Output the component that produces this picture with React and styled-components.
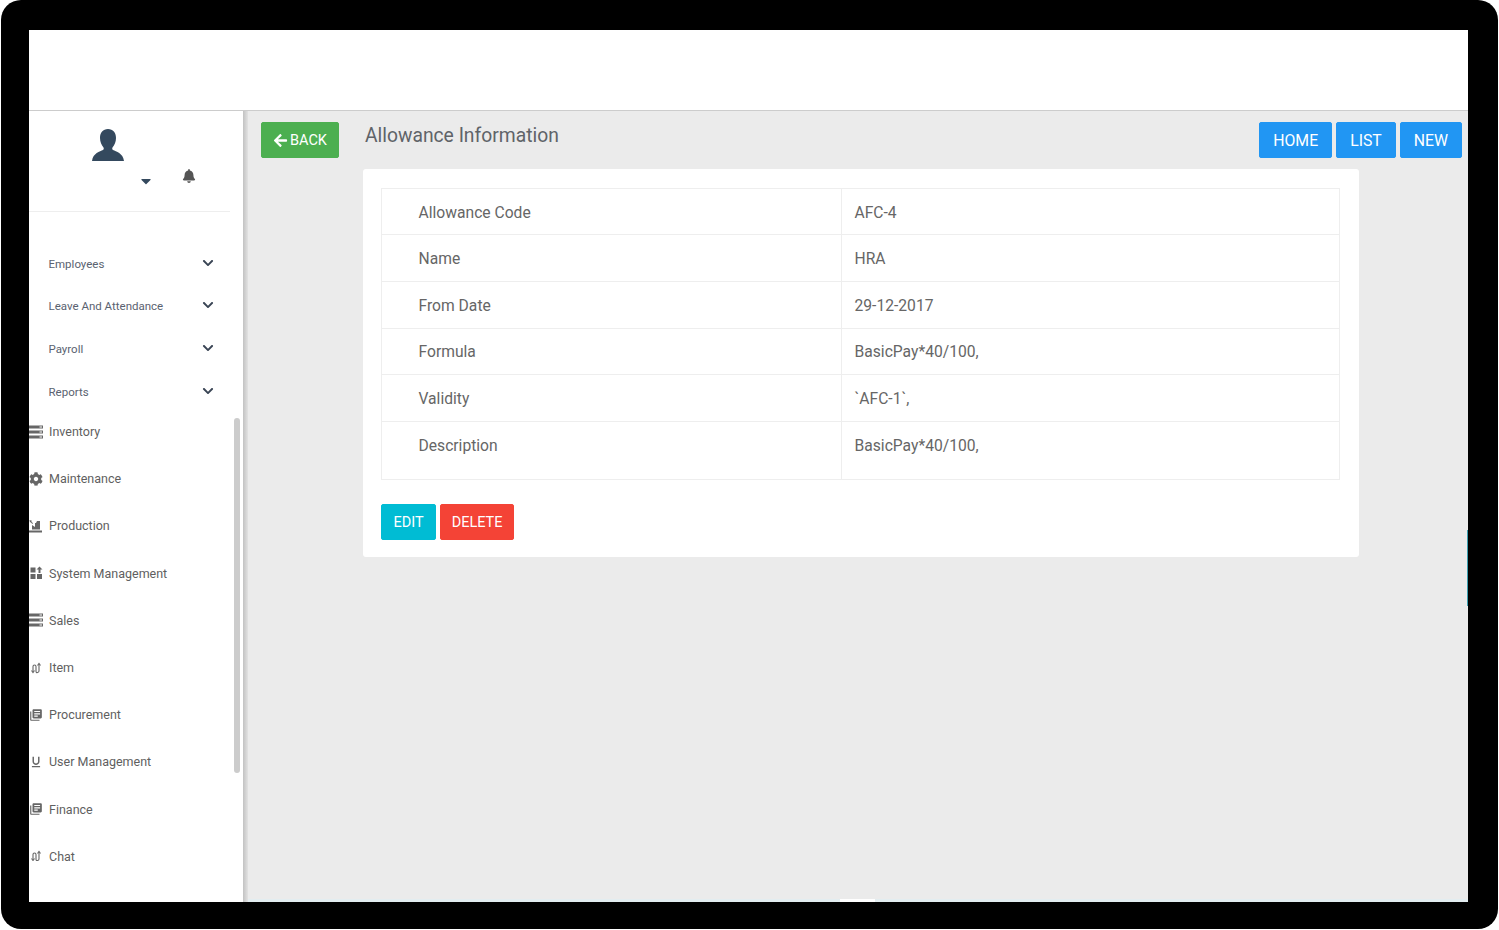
import React from "react";
import styled, { createGlobalStyle } from "styled-components";
import { FaArrowLeft, FaBell, FaChevronDown, FaCaretDown, FaCog } from "react-icons/fa";
import { MdLibraryBooks, MdFormatUnderlined } from "react-icons/md";

const Global = createGlobalStyle`
  html, body { margin: 0; padding: 0; background: #fff; }
  body { width: 1499px; height: 930px; overflow: hidden; font-family: Roboto, "Liberation Sans", sans-serif; }
  * { box-sizing: border-box; }
`;

const Frame = styled.div`
  width: 1497px; height: 929px; margin-left: 1px;
  background: #000;
  border-radius: 20px;
  padding: 30px 30px 27px 28px;
  display: flex; flex-direction: column;
`;
const TopBar = styled.header`
  height: 81px; flex: none; background: #fff; border-bottom: 1px solid #ccc;
`;
const Body = styled.div`
  flex: 1; min-height: 0; display: flex;
`;
const Sidebar = styled.aside`
  width: 214px; flex: none; background: #fff; position: relative; overflow: hidden;
  display: flex; flex-direction: column;
`;
const Profile = styled.div`
  width: 201px; height: 101px; flex: none; border-bottom: 1px solid #eee;
  display: flex; flex-direction: column; align-items: center; padding-top: 18px;
`;
const Avatar = styled.svg`
  width: 32px; height: 32px; color: #34495e; margin-left: -43px; flex: none;
`;
const ProfileTools = styled.div`
  display: flex; align-items: center; height: 24px; padding-left: 75px; gap: 28px;
`;
const Caret = styled(FaCaretDown)`
  color: #34495e; font-size: 16px; margin-top: 15px;
`;
const Bell = styled(FaBell)`
  color: #555; font-size: 14px; margin-top: 6px;
`;
const Scroller = styled.div`
  flex: 1; min-height: 0; margin-bottom: 41px; overflow: hidden;
`;
const SubMenu = styled.nav`
  padding-top: 31px; display: flex; flex-direction: column;
`;
const SubItem = styled.div`
  height: ${p => p.$h}px; display: flex; align-items: center; justify-content: space-between;
  padding: 0 29px 0 19.5px; font-size: 11.5px; color: #5a6270;
`;
const Chevron = styled(FaChevronDown)`
  font-size: 12px; color: #3a4555; margin-top: -2px;
`;
const MainMenu = styled.nav`
  display: flex; flex-direction: column; margin-top: -5px;
`;
const MenuItem = styled.div`
  height: 47.2px; flex: none; display: flex; align-items: center; gap: 6px;
  font-size: 12.5px; color: #5f5f5f; white-space: nowrap;
`;
const IconBox = styled.span`
  width: 14px; flex: none; display: flex; align-items: center; justify-content: center;
  color: #666; font-size: 14px; overflow: hidden;
`;
const ScrollThumb = styled.div`
  position: absolute; left: 205px; top: 307px; width: 6px; height: 355px;
  border-radius: 3px; background: #ccc;
`;
const Gutter = styled.div`
  width: 5px; flex: none; background: linear-gradient(90deg, #c2c2c2, #e2e2e2);
`;
const Main = styled.main`
  flex: 1; min-width: 0; background: #ebebeb; padding: 11px 6px 0 13px; position: relative;
  display: flex; flex-direction: column;
`;
const ActionBar = styled.div`
  display: flex; align-items: flex-start; height: 47px; flex: none;
`;
const Btn = styled.button`
  height: 36px; border: 1px solid ${p => p.$c}; background: ${p => p.$c}; color: #fff;
  border-radius: 2px; font: 400 ${p => p.$fs || 15.8}px Roboto, sans-serif;
  padding: ${p => p.$pt || 0}px ${p => p.$px || 13}px 0;
  display: inline-flex; align-items: center; gap: 2px; margin: 0;
`;
const PageTitle = styled.h1`
  margin: 0 0 0 26px; font: 400 19.3px/28px Roboto, sans-serif; color: #5f6368; flex: 1;
`;
const NavGroup = styled.div`
  display: flex; gap: 4px;
`;
const Card = styled.section`
  width: 996px; height: 388px; margin: 0 0 0 102px; flex: none; background: #fff; border-radius: 3px;
  padding: 19px 19px 0 18px;
`;
const Table = styled.table`
  width: 959px; height: 291px; border-collapse: collapse; table-layout: fixed;
  border: 1px solid #eee; font-size: 15.65px; color: #666;
`;
const Row = styled.tr`
  height: 46.5px;
  border-top: 1px solid #eee;
  &:first-child { height: 46px; }
  &:nth-child(2) { height: 47px; }
  &:last-child { height: 58px; }
  &:last-child td { vertical-align: top; padding-top: 14px; }
`;
const Key = styled.td`
  width: 460px; padding: 1px 0 0 36.5px; border-right: 1px solid #eee;
`;
const Value = styled.td`
  padding: 1px 0 0 12.5px;
`;
const CardActions = styled.div`
  display: flex; gap: 4px; margin-top: 24px;
`;
const BottomStrip = styled.div`
  position: absolute; left: 0; right: 0; bottom: 0; height: 3px;
  background: linear-gradient(90deg, #e3edf0 0 592px, #fff 592px 627px, #e3edf0 627px);
`;
const EdgeMark = styled.div`
  position: absolute; right: 0; top: 419px; width: 1px; height: 76px; background: #3c9fb0;
`;

const rows = [
  ["Allowance Code", "AFC-4"],
  ["Name", "HRA"],
  ["From Date", "29-12-2017"],
  ["Formula", "BasicPay*40/100,"],
  ["Validity", "`AFC-1`,"],
  ["Description", "BasicPay*40/100,"],
];

const ServerIcon = () => (
  <svg width="14" height="14" viewBox="0 0 14 14" fill="currentColor">
    <path d="M0 .5h14v3H0zM0 5.500h14v3H0zM0 10.500h14v3H0z" />
    <path fill="#fff" d="M10.500 1.500h2.500v1h-2.500zM10.500 6.500h2.500v1h-2.500zM10.500 11.500h2.500v1h-2.500z" />
  </svg>
);
const FactoryIcon = () => (
  <svg width="14" height="14" viewBox="0 0 14 14" fill="currentColor">
    <path d="M0 11.500h13v2H0z" />
    <path d="M3 10.500V6l3 2V4h1l1-2h3v8.500z" />
    <path d="M.5 1l2.500.7-.7.7L4 4.200l-.7.7L1.600 3.100l-.6.6z" />
  </svg>
);
const GridArrowIcon = () => (
  <svg width="14" height="14" viewBox="0 0 14 14" fill="currentColor">
    <path d="M1.500 1.500h5v5h-5zM1.500 8h5v5h-5zM8 8h5v5H8z" />
    <path d="M10.500.5l3 3h-2v3.500h-2V3.500h-2z" />
  </svg>
);
const SwapIcon = () => (
  <svg width="14" height="14" viewBox="0 0 14 14" fill="none" stroke="currentColor" strokeWidth="1.100">
    <path d="M4 11V5.500C4 3.500 7 3.500 7 5.500v5c0 2 3 1 3-.5V3" />
    <path d="M2.500 9.500L4 11.500l1.500-2M8.500 4.500L10 2.500l1.500 2" />
  </svg>
);

const menu = [
  ["Inventory", <ServerIcon />],
  ["Maintenance", <FaCog />],
  ["Production", <FactoryIcon />],
  ["System Management", <GridArrowIcon />],
  ["Sales", <ServerIcon />],
  ["Item", <SwapIcon />],
  ["Procurement", <MdLibraryBooks />],
  ["User Management", <MdFormatUnderlined />],
  ["Finance", <MdLibraryBooks />],
  ["Chat", <SwapIcon />],
];

export default function App() {
  return (
    <>
      <Global />
      <Frame>
        <TopBar />
        <Body>
          <Sidebar>
            <Profile>
              <Avatar viewBox="0 0 32 32" fill="currentColor">
                <path d="M16 0c-5 0-8 3.500-8 9 0 4 1.500 7 3.500 9.500.5 1 .3 2-.5 2.500C8 22.500 1 24 0 32h32c-1-8-8-9.500-11-11-.8-.5-1-1.500-.5-2.500C22.500 16 24 13 24 9c0-5.500-3-9-8-9z" />
              </Avatar>
              <ProfileTools>
                <Caret />
                <Bell />
              </ProfileTools>
            </Profile>
            <Scroller>
              <SubMenu>
                <SubItem $h={41}>Employees<Chevron /></SubItem>
                <SubItem $h={43}>Leave And Attendance<Chevron /></SubItem>
                <SubItem $h={43}>Payroll<Chevron /></SubItem>
                <SubItem $h={43}>Reports<Chevron /></SubItem>
              </SubMenu>
              <MainMenu>
                {menu.map(([label, icon]) => (
                  <MenuItem key={label}><IconBox>{icon}</IconBox>{label}</MenuItem>
                ))}
              </MainMenu>
            </Scroller>
            <ScrollThumb />
          </Sidebar>
          <Gutter />
          <Main>
            <ActionBar>
              <Btn $c="#4caf50" $px={11} $fs={14.5}><FaArrowLeft size={15} />BACK</Btn>
              <PageTitle>Allowance Information</PageTitle>
              <NavGroup>
                <Btn $c="#2196f3">HOME</Btn>
                <Btn $c="#2196f3">LIST</Btn>
                <Btn $c="#2196f3">NEW</Btn>
              </NavGroup>
            </ActionBar>
            <Card>
              <Table>
                <tbody>
                  {rows.map(([k, v]) => (
                    <Row key={k}><Key>{k}</Key><Value>{v}</Value></Row>
                  ))}
                </tbody>
              </Table>
              <CardActions>
                <Btn $c="#00bcd4" $px={11.5} $pt={2} $fs={14.5}>EDIT</Btn>
                <Btn $c="#f44336" $px={10.5} $pt={2} $fs={14.5}>DELETE</Btn>
              </CardActions>
            </Card>
            <EdgeMark />
            <BottomStrip />
          </Main>
        </Body>
      </Frame>
    </>
  );
}
